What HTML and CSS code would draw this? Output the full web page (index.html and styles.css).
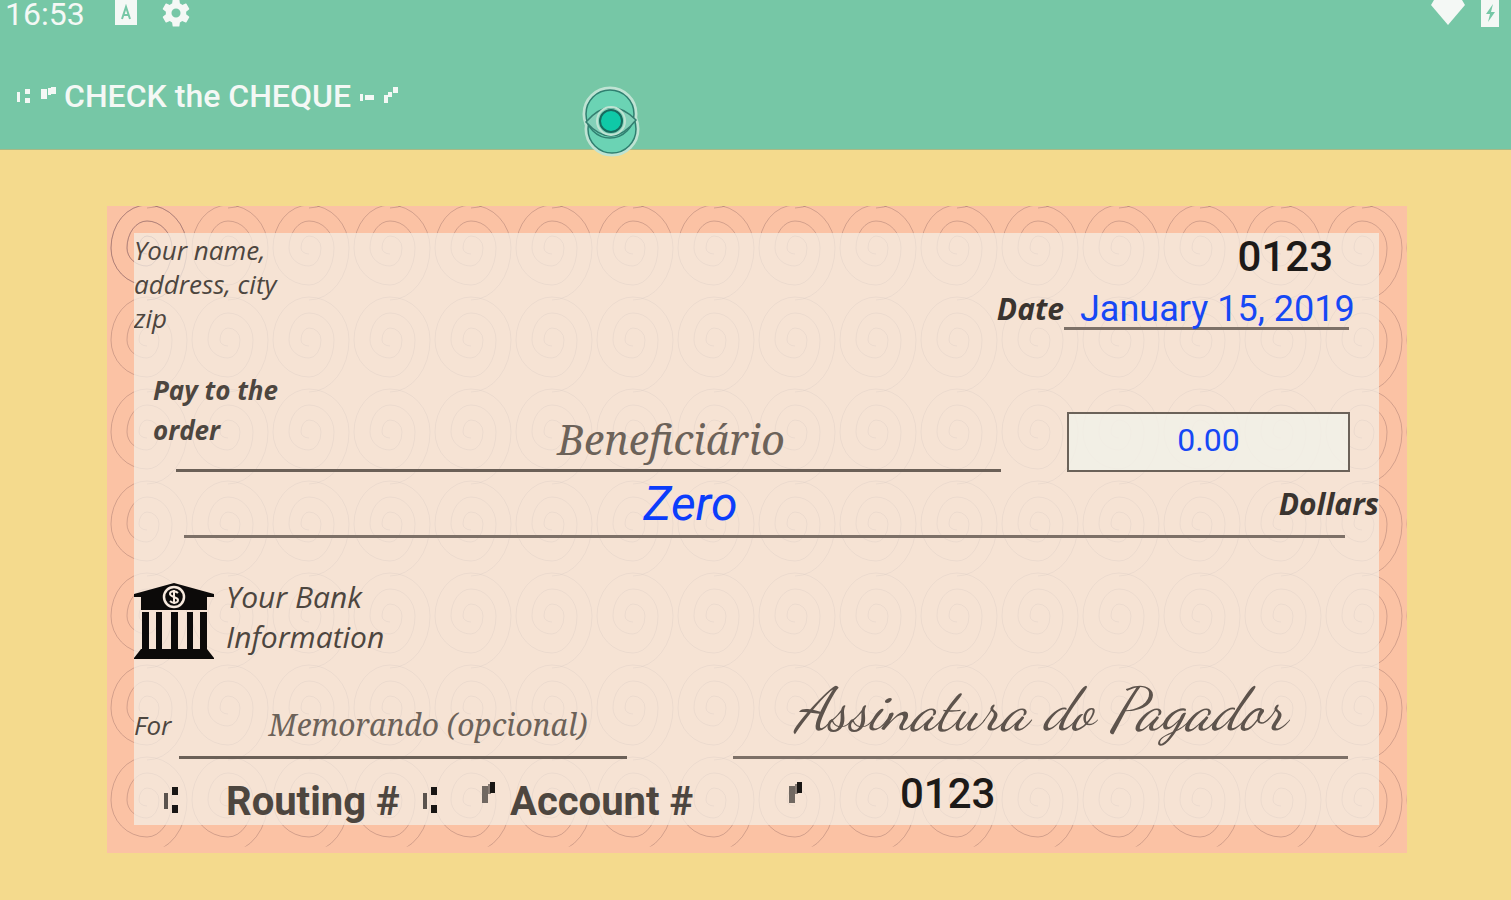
FILE: index.html
```
<!DOCTYPE html>
<html lang="pt">
<head>
  <meta charset="utf-8">
  <title>CHECK the CHEQUE</title>
  <link rel="stylesheet" href="styles.css">
</head>
<body>
  <svg class="defs" aria-hidden="true">
    <defs>
      <symbol id="transit" viewBox="0 0 16 28">
        <path d="M1 7h4v16H1z" opacity=".7"/>
        <path d="M9 1h6v8H9zM9 19h6v8H9z"/>
      </symbol>
      <symbol id="onus" viewBox="0 0 16 28">
        <path d="M1 6h6v17H1z" opacity=".6"/>
        <path d="M7 4h3v10H7z" opacity=".5"/>
        <path d="M9 2h5v11H9z"/>
      </symbol>
    </defs>
  </svg>

  <header class="app-header">
    <div class="status-bar">
      <span class="clock">16:53</span>
      <svg class="status-icon" viewBox="0 0 24 28" width="24" height="28">
        <path fill="#f4f8f5" d="M1 0h22v25H1z"/>
        <path fill="none" stroke="#76c7a6" stroke-width="2" d="M8 19l4-12 4 12M9 15h6"/>
      </svg>
      <svg class="status-icon gear" viewBox="0 0 24 24" width="34" height="34">
        <path fill="#f4f8f5" d="M19.14 12.94a7 7 0 0 0 0-1.88l2.03-1.58a.5.5 0 0 0 .12-.61l-1.92-3.32a.5.5 0 0 0-.59-.22l-2.39.96a7 7 0 0 0-1.62-.94l-.36-2.54a.5.5 0 0 0-.48-.41h-3.84a.5.5 0 0 0-.47.41l-.36 2.54a7 7 0 0 0-1.62.94l-2.39-.96a.5.5 0 0 0-.59.22L2.74 8.87a.5.5 0 0 0 .12.61l2.03 1.58a7 7 0 0 0 0 1.88l-2.03 1.58a.5.5 0 0 0-.12.61l1.92 3.32c.12.22.37.29.59.22l2.39-.96c.5.38 1.03.7 1.62.94l.36 2.54c.05.24.24.41.48.41h3.84c.24 0 .44-.17.47-.41l.36-2.54a7 7 0 0 0 1.62-.94l2.39.96c.22.08.47 0 .59-.22l1.92-3.32a.5.5 0 0 0-.12-.61zM12 15.2a3.2 3.2 0 1 1 0-6.4 3.2 3.2 0 0 1 0 6.4z"/>
      </svg>
      <span class="spacer"></span>
      <svg class="status-icon" viewBox="0 0 36 26" width="36" height="26">
        <path fill="#f4f8f5" d="M4 0h28l3 5-17 20L1 5z"/>
      </svg>
      <svg class="status-icon" viewBox="0 0 18 28" width="18" height="28">
        <path fill="#f4f8f5" d="M0 0h18v27H0z"/>
        <path fill="#76c7a6" d="M12 4L5 14h4l-2 8 7-10h-4z"/>
      </svg>
    </div>
    <h1 class="app-title">
      <svg class="title-mark" viewBox="0 0 40 24" width="40" height="24">
        <path d="M1 8h3v10H1zM9 5h5v5H9zM9 14h5v5H9zM25 5h6v10h-6zM32 4h3v7h-3zM35 3h5v7h-5z"/>
      </svg>
      CHECK the CHEQUE
      <svg class="title-mark" viewBox="0 0 40 24" width="40" height="24">
        <path d="M1 10h3v7H1zM6 11h4v5H6zM10 11h5v5h-5zM25 11h4v8h-4zM29 8h4v5h-4zM34 3h5v6h-5z"/>
      </svg>
    </h1>
    <svg class="eye-badge" viewBox="0 0 58 72" width="58" height="72" role="img" aria-label="Preview">
      <g fill="#71d0b1" stroke="#bfe3d3" stroke-width="5">
        <circle cx="28" cy="29" r="25"/>
        <circle cx="30" cy="44" r="25"/>
      </g>
      <g fill="#6bd3b4" stroke="#2f7f70" stroke-width="1.5">
        <circle cx="30" cy="44" r="24"/>
        <circle cx="28" cy="29" r="24"/>
      </g>
      <path fill="#84d1b9" stroke="#347e70" stroke-width="1.5" d="M4 37Q28 9 54 35Q30 66 4 37z"/>
      <circle cx="29" cy="36" r="14" fill="none" stroke="#bfe3d3" stroke-width="2"/>
      <circle cx="29" cy="36" r="11" fill="#0fc9a7" stroke="#176b5e" stroke-width="2"/>
    </svg>
  </header>

  <main class="cheque">
    <svg class="swirls" width="100%" height="100%" aria-hidden="true">
      <defs>
        <path id="swirl" d="M0 6A8 6 0 0 1-8 0A8 12 0 0 1 0-12A12 12 0 0 1 12 0A12 18 0 0 1 0 18A20 18 0 0 1-20 0A20 27 0 0 1 0-27A25 27 0 0 1 25 0A25 37 0 0 1 0 37A36 37 0 0 1-36 0A36 43 0 0 1 0-43A40 43 0 0 1 40 0A40 52 0 0 1 0 52"/>
        <pattern id="swirl-tile" x="0" y="-2" width="81" height="92" patternUnits="userSpaceOnUse">
          <use href="#swirl" x="40" y="44"/>
          <use href="#swirl" x="40" y="-48"/>
        </pattern>
      </defs>
      <rect width="100%" height="99%" fill="url(#swirl-tile)" stroke="none"/>
      <use class="swirl-first" href="#swirl" x="40" y="42"/>
    </svg>

    <form class="cheque-body">
      <div class="row top-row">
        <textarea class="condensed address" aria-label="Your name and address" rows="3" placeholder="Your name, address, city zip"></textarea>
        <div class="top-right">
          <div class="cheque-no">0123</div>
          <div class="date-row">
            <label class="condensed strong" for="date">Date</label>
            <div class="date-line"><input class="filled date" id="date" value="January 15, 2019"></div>
          </div>
        </div>
      </div>

      <div class="row pay-row">
        <div class="pay-line">
          <label class="condensed pay-label" for="payee">Pay to the order</label>
          <input class="serif payee" id="payee" placeholder="Beneficiário">
        </div>
        <input class="filled amount" aria-label="Amount" value="0.00">
      </div>

      <div class="row words-row">
        <output class="words">Zero</output>
        <span class="condensed strong dollars">Dollars</span>
      </div>

      <div class="row bank-row">
        <svg class="bank-icon" viewBox="0 0 80 76" width="80" height="76" aria-hidden="true">
          <path d="M40 0L80 11v3h-7v13H7V14H0v-3z"/>
          <path d="M8 29h7v38H8zM22 29h6v38h-6zM37 29h7v38h-7zM53 29h6v38h-6zM66 29h7v38h-7z"/>
          <path d="M7 66h66l7 9v1H0v-1z"/>
          <circle cx="40" cy="14" r="10" fill="none" stroke="#f7e9dd" stroke-width="2.5"/>
          <path d="M44 10c-3-3-8-2-8 1s8 3 8 6-5 4-8 1M40 7v14" fill="none" stroke="#f7e9dd" stroke-width="2"/>
        </svg>
        <div class="condensed bank-text">Your Bank<br>Information</div>
      </div>

      <div class="row sign-row">
        <label class="condensed for-label" for="memo">For</label>
        <input class="serif memo" id="memo" placeholder="Memorando (opcional)">
        <input class="signature" aria-label="Assinatura" placeholder="Assinatura do Pagador">
      </div>

      <div class="row micr-row">
        <svg class="mark mark-transit"><use href="#transit"/></svg>
        <input class="micr routing" aria-label="Routing number" placeholder="Routing #">
        <svg class="mark mark-transit"><use href="#transit"/></svg>
        <svg class="mark mark-account"><use href="#onus"/></svg>
        <input class="micr account" aria-label="Account number" placeholder="Account #">
        <svg class="mark"><use href="#onus"/></svg>
        <span class="cheque-no micr-no">0123</span>
      </div>
    </form>
  </main>
</body>
</html>
```
FILE: styles.css
```
* {
  box-sizing: border-box;
}
body {
  margin: 0;
  min-height: 100vh;
  background: #f4da8d;
  font-family: Roboto, Arial, sans-serif;
  color: #4d463f;
}
.defs {
  display: block;
  width: 0;
  height: 0;
}

/* header */
.app-header {
  position: relative;
  height: 150px;
  background: #76c7a6;
  color: #f4f8f5;
  border-bottom: 1px solid #a9b884;
}
.status-bar {
  display: flex;
  align-items: flex-start;
  height: 72px;
  padding: 0 12px 0 5px;
}
.clock {
  font-size: 32px;
  line-height: 28px;
}
.clock + .status-icon {
  margin-left: 29px;
}
.gear {
  margin: -4px 0 0 21px;
}
.spacer {
  flex: 1;
}
.spacer + .status-icon {
  margin-right: 15px;
}
.app-title {
  display: flex;
  align-items: center;
  gap: 8px;
  margin: 0;
  padding-left: 16px;
  font-size: 32px;
  line-height: 48px;
  font-weight: 500;
}
.title-mark {
  fill: #f4f8f5;
}
.eye-badge {
  position: absolute;
  left: 582px;
  top: 85px;
}

/* cheque */
.cheque {
  position: relative;
  margin: 56px 104px 47px 107px;
  padding: 27px 28px 28px 27px;
  background: #fbc2a4;
}
.swirls {
  position: absolute;
  left: 0;
  top: 0;
  fill: none;
  stroke: rgba(125, 85, 85, 0.32);
}
.swirl-first {
  stroke: rgba(125, 85, 95, 0.4);
}
.cheque-body {
  position: relative;
  background: rgba(244, 239, 230, 0.74);
}
.row {
  display: flex;
}
input,
textarea {
  display: block;
  min-width: 0;
  margin: 0;
  padding: 0;
  border: 0;
  border-radius: 0;
  background: none;
  outline: none;
  resize: none;
  overflow: hidden;
  color: inherit;
}
input::placeholder,
textarea::placeholder {
  color: inherit;
  opacity: 1;
}
.condensed {
  font-family: "Open Sans", sans-serif;
  font-style: italic;
}
.strong {
  font-size: 30px;
  font-weight: 700;
  color: #3a342f;
}
.filled {
  font-family: Roboto, Arial, sans-serif;
  color: #1648f5;
}
.serif {
  font-family: "Noto Serif", "Liberation Serif", serif;
  font-style: italic;
  text-align: center;
  color: #6c6259;
}

.top-row {
  justify-content: space-between;
  padding-right: 30px;
}
.address {
  width: 150px;
  font-size: 26px;
  line-height: 34px;
}
.cheque-no {
  font-size: 42px;
  line-height: 48px;
  font-weight: 500;
  color: #1d1a18;
}
.top-right .cheque-no {
  padding-right: 16px;
  text-align: right;
}
.date-row {
  display: flex;
  justify-content: flex-end;
  line-height: 56px;
}
.date-line {
  width: 285px;
  height: 49px;
  border-bottom: 3px solid #7d7168;
}
.date {
  width: 280px;
  height: 56px;
  margin-left: 16px;
  font-size: 36px;
}

.pay-row {
  align-items: flex-end;
  gap: 66px;
  margin-top: 33px;
  padding: 0 29px 0 42px;
}
.pay-line {
  display: flex;
  flex: 1;
  align-items: flex-start;
  height: 102px;
  border-bottom: 3px solid #6b6057;
}
.pay-label {
  width: 188px;
  margin-left: -23px;
  padding-right: 40px;
  font-size: 26px;
  line-height: 40px;
  font-weight: 700;
}
.payee {
  flex: 1;
  align-self: flex-end;
  height: 60px;
  font-size: 41px;
}
.amount {
  width: 283px;
  height: 60px;
  padding-bottom: 4px;
  border: 2px solid #6b6259;
  background: rgba(241, 241, 232, 0.8);
  font-size: 32px;
  text-align: center;
}

.words-row {
  align-items: center;
  height: 66px;
  margin: 0 34px 0 50px;
  border-bottom: 3px solid #7d7067;
}
.words {
  flex: 1;
  font-size: 48px;
  font-style: italic;
  text-align: center;
  color: #0b3dfb;
}
.dollars {
  width: 182px;
  margin-right: -34px;
  text-align: right;
}

.bank-row {
  align-items: flex-start;
  gap: 12px;
  margin-top: 39px;
}
.bank-icon {
  margin-top: 6px;
  fill: #0c0a09;
}
.bank-text {
  font-size: 30px;
  line-height: 40px;
}

.sign-row {
  align-items: flex-end;
  height: 100px;
  padding-right: 31px;
}
.for-label {
  width: 45px;
  font-size: 26px;
  line-height: 68px;
}
.memo {
  width: 448px;
  height: 66px;
  padding-left: 50px;
  border-bottom: 3px solid #6b6057;
  font-size: 30px;
}
.signature {
  flex: 1;
  height: 96px;
  margin-left: 106px;
  border-bottom: 3px solid #7d7067;
  font-family: "Dancing Script", cursive;
  font-style: italic;
  font-size: 60px;
  text-align: center;
  color: #5d534c;
}

.micr-row {
  align-items: center;
  height: 66px;
  padding: 4px 0 0 29px;
}
.mark {
  flex: none;
  width: 16px;
  height: 28px;
  fill: #191614;
}
.mark-transit {
  margin-top: 12px;
}
.micr {
  height: 60px;
  padding-top: 14px;
  font-family: Roboto, Arial, sans-serif;
  font-size: 40px;
  font-weight: 700;
}
.routing {
  width: 196px;
  margin-left: 47px;
}
.mark-account {
  margin: 0 13px 0 43px;
}
.account {
  width: 278px;
}
.micr-no {
  margin-left: 96px;
}
```
